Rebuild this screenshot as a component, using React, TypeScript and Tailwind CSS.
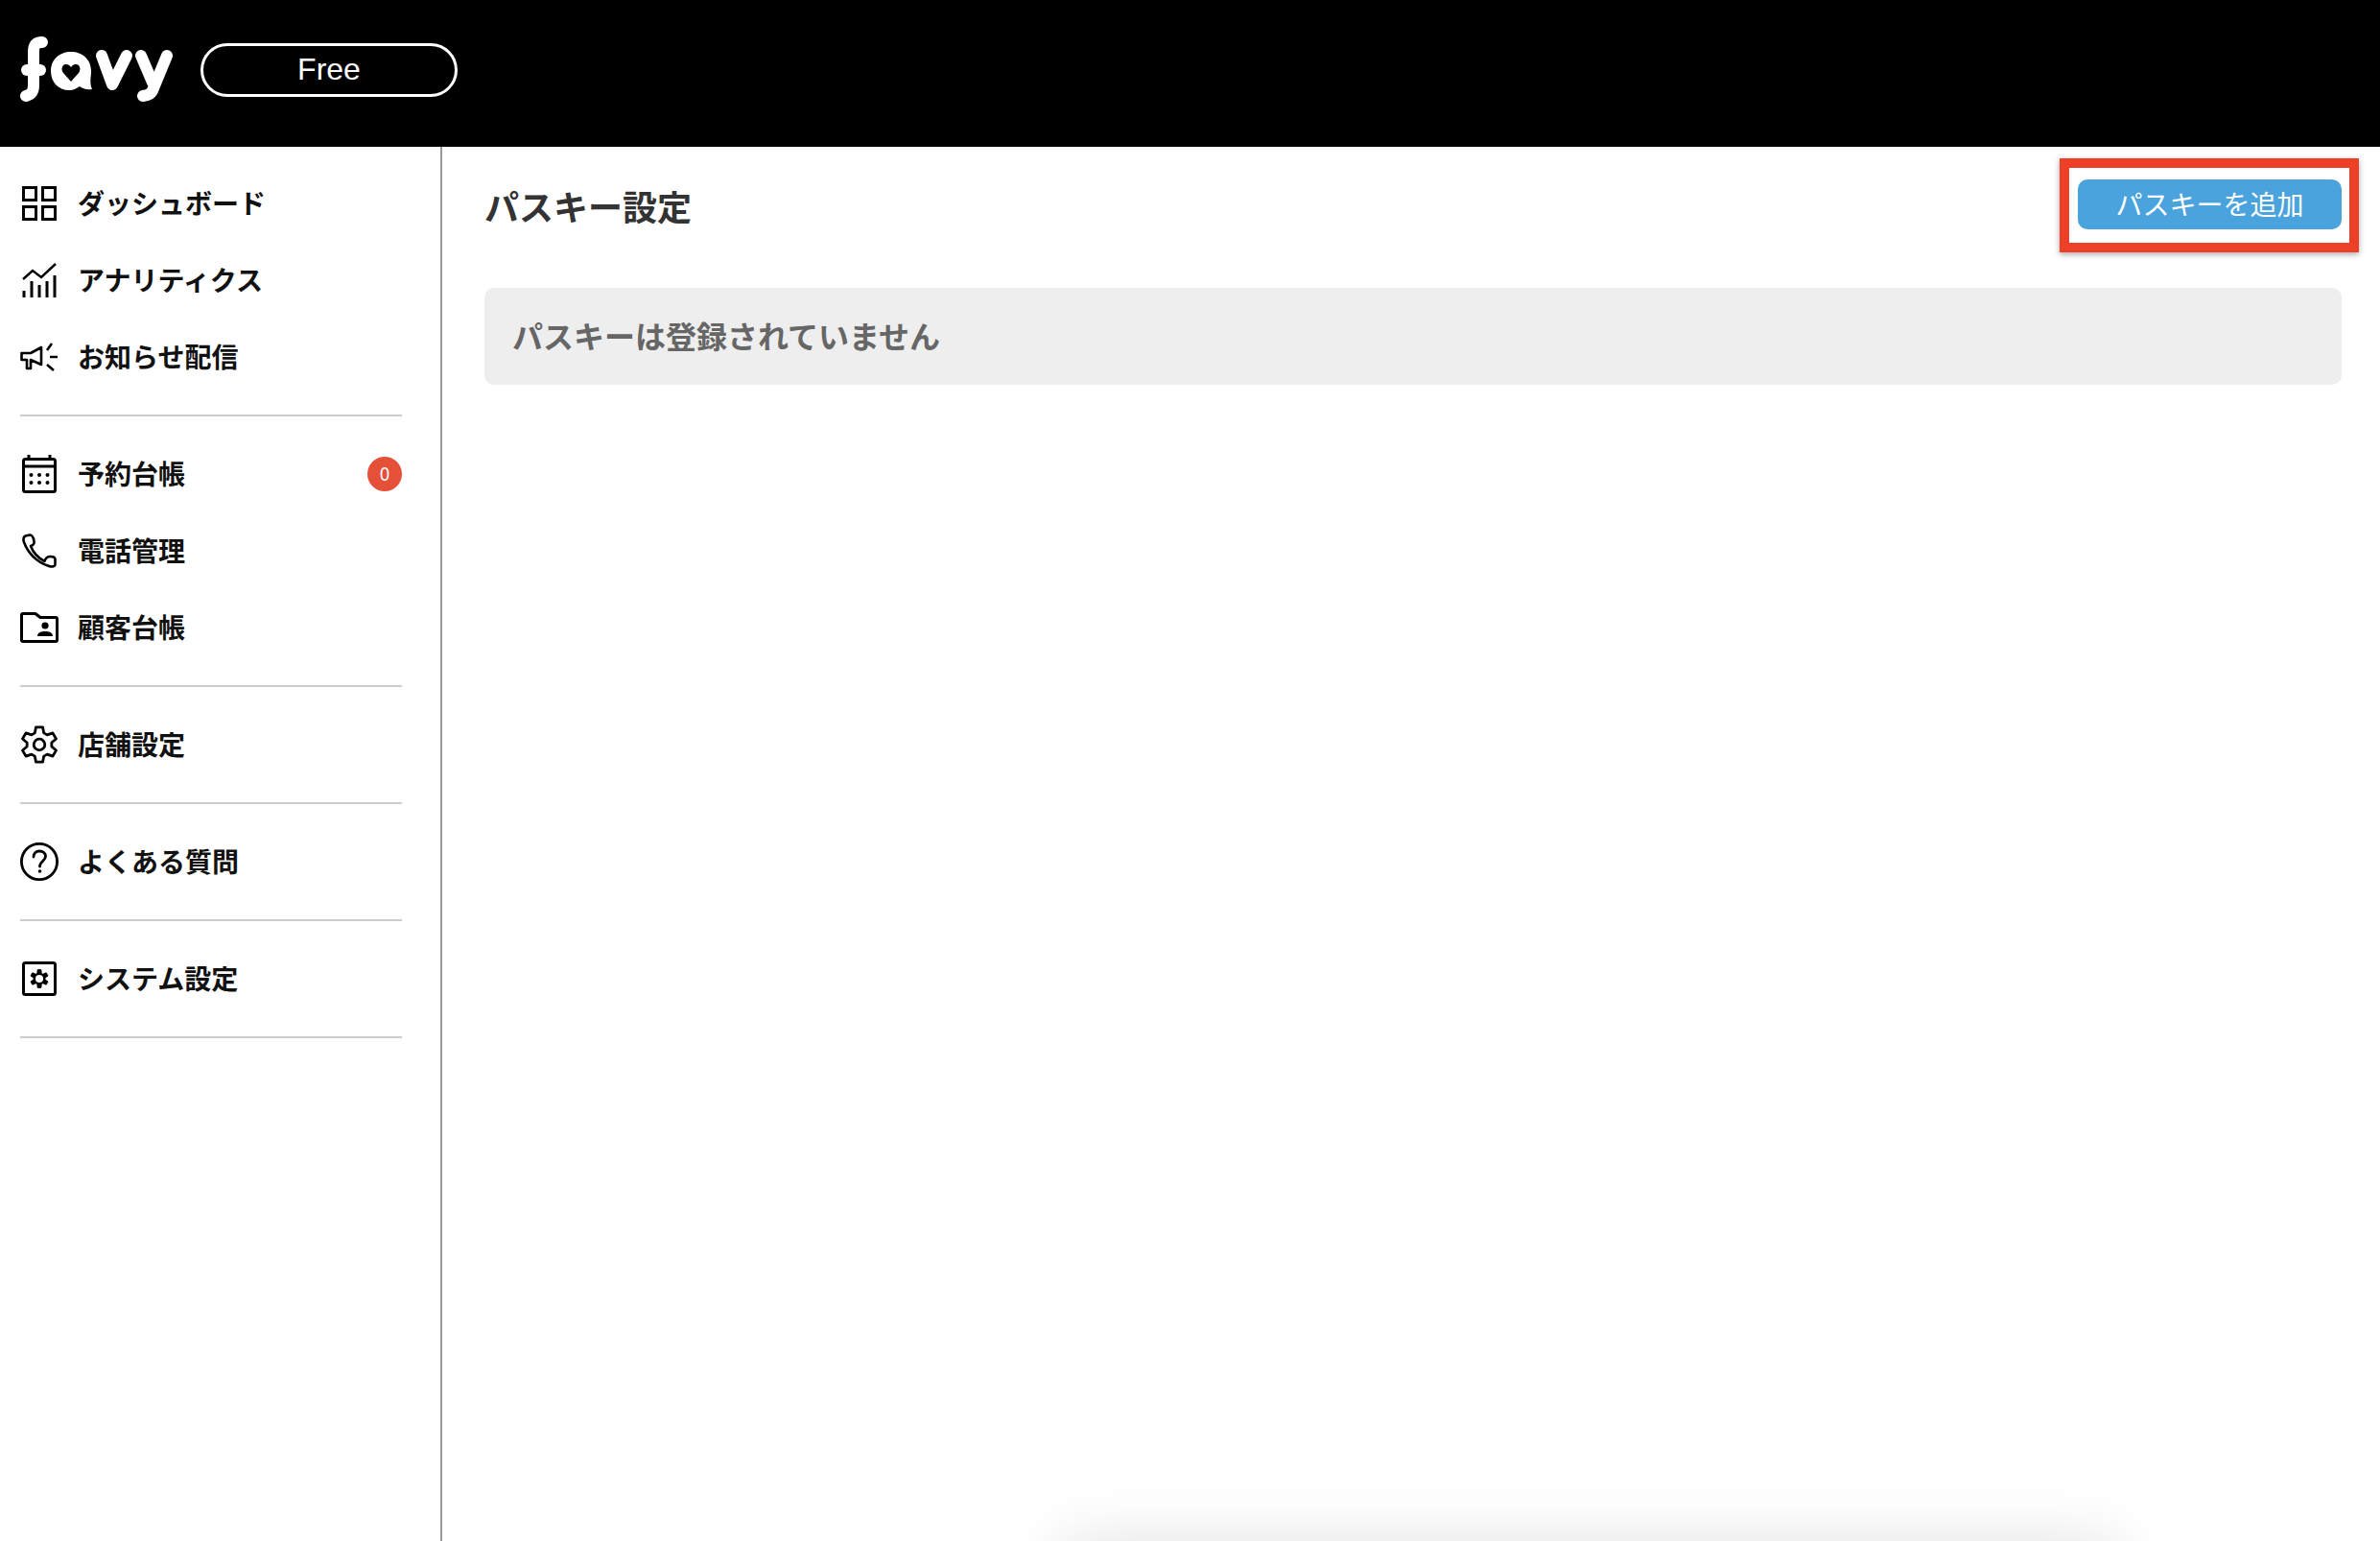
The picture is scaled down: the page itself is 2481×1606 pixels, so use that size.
import React from 'react';

// 6-tooth gear outline, used by the shop settings and system settings icons
const gearPath = (cx: number, cy: number, rOut: number, rIn: number) => {
  const pts: string[] = [];
  for (let i = 0; i < 6; i++) {
    const a = -90 + i * 60;
    [
      [rIn, a - 21],
      [rOut, a - 11],
      [rOut, a + 11],
      [rIn, a + 21],
    ].forEach(([r, deg]) => {
      const rad = (deg * Math.PI) / 180;
      pts.push(`${(cx + r * Math.cos(rad)).toFixed(2)} ${(cy + r * Math.sin(rad)).toFixed(2)}`);
    });
  }
  return `M${pts.join(' L')} Z`;
};

const DashboardIcon = () => (
  <svg width="36" height="36" viewBox="0 0 36 36" fill="none" stroke="#000" strokeWidth="3">
    <rect x="1.5" y="1.5" width="13" height="13" />
    <rect x="21.5" y="1.5" width="13" height="13" />
    <rect x="1.5" y="21.5" width="13" height="13" />
    <rect x="21.5" y="21.5" width="13" height="13" />
  </svg>
);

const AnalyticsIcon = () => (
  <svg width="36" height="36" viewBox="0 0 36 36" fill="none" stroke="#000" strokeWidth="2.4">
    <path d="M1 17 L11 8 L20 15 L35 1" />
    <path d="M2 29 V36 M10 19 V36 M18 23 V36 M26 19 V36 M34 13 V36" strokeWidth="3" />
  </svg>
);

const MegaphoneIcon = () => (
  <svg width="40" height="32" viewBox="0 0 40 32" fill="none" stroke="#000" strokeWidth="2.6" strokeLinejoin="round">
    <path d="M1.5 12 V19 H7 V28 H11 V19 L22 24 V6 L11 12 Z" />
    <path d="M28 9 L33 2 M31 16 H39 M28 24 L35 30" />
  </svg>
);

const CalendarIcon = () => (
  <svg width="36" height="40" viewBox="0 0 36 40" fill="none" stroke="#000" strokeWidth="3">
    <rect x="1.5" y="4.5" width="33" height="34" rx="2" />
    <path d="M1.5 12 H34.5 M7 0 V5 M29 0 V5" />
    <g fill="#000" stroke="none">
      <circle cx="9.5" cy="21" r="2" />
      <circle cx="18" cy="21" r="2" />
      <circle cx="26.5" cy="21" r="2" />
      <circle cx="9.5" cy="29" r="2" />
      <circle cx="18" cy="29" r="2" />
      <circle cx="26.5" cy="29" r="2" />
    </g>
  </svg>
);

const PhoneIcon = () => (
  <svg width="36" height="36" viewBox="0 0 36 36" fill="none" stroke="#000" strokeWidth="2.6" strokeLinejoin="round">
    <path d="M8 1.5 L3.5 2.5 C1.5 3.5 1 6 2 9 C6 20 15 30 28 34 C31.5 35 34.5 34.5 34.5 32 V27 C34.5 25 32 24 29.5 24 C26.5 24 24.5 25.5 23.5 29 C17 25.5 11.5 20 9 13 C11.5 12.5 13 10.5 12.5 8 C12 5 10.5 1.5 8 1.5 Z" />
  </svg>
);

const FolderIcon = () => (
  <svg width="40" height="32" viewBox="0 0 40 32" fill="none">
    <path d="M1.5 3 C1.5 2 2 1.5 3 1.5 H16 L21 5.5 H37 C38 5.5 38.5 6 38.5 7 V29 C38.5 30 38 30.5 37 30.5 H3 C2 30.5 1.5 30 1.5 29 Z" stroke="#000" strokeWidth="3" strokeLinejoin="round" />
    <circle cx="26" cy="14" r="3.6" fill="#000" />
    <path d="M18 25 C18 21 22 20 26 20 C30 20 34 21 34 25 Z" fill="#000" />
  </svg>
);

const GearIcon = () => (
  <svg width="40" height="40" viewBox="0 0 40 40" fill="none" stroke="#000" strokeWidth="2.8" strokeLinejoin="round">
    <path d={gearPath(20, 20, 18.5, 13)} />
    <circle cx="20" cy="20" r="5.8" />
  </svg>
);

const HelpIcon = () => (
  <svg width="40" height="40" viewBox="0 0 40 40" fill="none" stroke="#000" strokeWidth="2.8">
    <circle cx="20" cy="20" r="18.6" />
    <path d="M14 15 C14 11 17 9 20 9 C24 9 26.5 11.5 26.5 14.5 C26.5 19 20.5 19.5 20.5 25" strokeLinecap="round" />
    <circle cx="20.5" cy="30" r="1.8" fill="#000" stroke="none" />
  </svg>
);

const SystemIcon = () => (
  <svg width="36" height="36" viewBox="0 0 36 36" fill="none" stroke="#000">
    <rect x="1.5" y="1.5" width="33" height="33" rx="2" strokeWidth="3" />
    <path d={gearPath(18, 18, 9.5, 6)} fill="#000" strokeWidth="1" strokeLinejoin="round" />
    <circle cx="18" cy="18" r="4" fill="#fff" stroke="none" />
  </svg>
);

const FavyLogo = () => (
  <svg width="160" height="70" viewBox="0 0 160 70" fill="none" stroke="#fff" strokeWidth="12" strokeLinecap="round" strokeLinejoin="round">
    <path d="M24 6 C17 6 15 9 15 16 V50 C15 58 13 60 7 62" />
    <path d="M8 35 H22" />
    <path
      d="M33 36 C33 24 42 16 54 16 C66 16 75 24 75 36 C75 43 73 48 76 55 C70 56 66 54 63 52 C60 54 57 56 52 56 C41 56 33 48 33 36 Z M54 47 L62 38 C65 34 63 29 59 29 C56.5 29 55 30.5 54 32 C53 30.5 51.5 29 49 29 C45 29 43 34 46 38 Z"
      fill="#fff"
      fillRule="evenodd"
      stroke="none"
    />
    <path d="M86 20 L97 50 L112 20" />
    <path d="M127 20 L139 48 M154 20 L140 54 C138 60 135 61 129 62" />
  </svg>
);

const groups = [
  [
    { label: 'ダッシュボード', icon: <DashboardIcon /> },
    { label: 'アナリティクス', icon: <AnalyticsIcon /> },
    { label: 'お知らせ配信', icon: <MegaphoneIcon /> },
  ],
  [
    { label: '予約台帳', icon: <CalendarIcon />, badge: 0 },
    { label: '電話管理', icon: <PhoneIcon /> },
    { label: '顧客台帳', icon: <FolderIcon /> },
  ],
  [{ label: '店舗設定', icon: <GearIcon /> }],
  [{ label: 'よくある質問', icon: <HelpIcon /> }],
  [{ label: 'システム設定', icon: <SystemIcon /> }],
];

const App: React.FC = () => {
  return (
    <div className="relative h-screen overflow-hidden bg-white flex flex-col font-['Noto_Sans_CJK_JP','Liberation_Sans',sans-serif]">
      {/* Header */}
      <header className="h-[153px] shrink-0 bg-black flex items-center pl-[20px] pb-[7px]">
        <FavyLogo />
        <div className="ml-[29px] w-[268px] h-[56px] pb-[2px] rounded-full border-[3.5px] border-white flex items-center justify-center text-white text-[32px] font-['Liberation_Sans',sans-serif]">
          Free
        </div>
      </header>

      <div className="flex flex-1 min-h-0">
        {/* Sidebar */}
        <aside className="w-[461px] shrink-0 border-r-2 border-[#999999] pl-[21px] pr-[40px]">
          {groups.map((items, i) => (
            <div key={i} className="py-[20px] border-b-2 border-[#cccccc] first:pt-[19px]">
              {items.map((item) => (
                <div key={item.label} className="h-[80px] flex items-center">
                  <span className="w-[40px] h-[44px] flex items-center justify-center shrink-0">{item.icon}</span>
                  <span className="ml-[20px] pb-[2px] text-[28px] font-bold text-[#111111]">{item.label}</span>
                  {item.badge !== undefined && (
                    <span className="ml-auto w-[36px] h-[36px] pb-[2px] rounded-full bg-[#e55039] text-white text-[19px] flex items-center justify-center">
                      {item.badge}
                    </span>
                  )}
                </div>
              ))}
            </div>
          ))}
        </aside>

        {/* Main */}
        <main className="relative flex-1 pl-[44px] pr-[40px] pt-[34px]">
          <div className="flex items-start justify-between mb-[61px]">
            <h1 className="h-[52px] pt-[2px] flex items-center text-[36px] font-bold text-[#333333]">パスキー設定</h1>
            <div className="relative">
              <button className="w-[275px] h-[52px] pb-[2px] rounded-[10px] bg-[#4aa3dc] text-white text-[28px] flex items-center justify-center">
                パスキーを追加
              </button>
              <div className="absolute -left-[19px] -right-[18px] -top-[22px] -bottom-[24px] border-[10px] border-[#ee4026] shadow-[0_2px_6px_rgba(0,0,0,0.35)]" />
            </div>
          </div>
          <div className="h-[101px] rounded-[10px] bg-[#eeeeee] flex items-center pl-[29px] pb-[4px] text-[32px] font-bold text-[#666666]">
            パスキーは登録されていません
          </div>
          <div className="absolute top-full left-[640px] w-[1110px] h-[60px] rounded-[40px] bg-white shadow-[0_0_64px_rgba(0,0,0,0.12)]" />
        </main>
      </div>
    </div>
  );
};

export default App;
